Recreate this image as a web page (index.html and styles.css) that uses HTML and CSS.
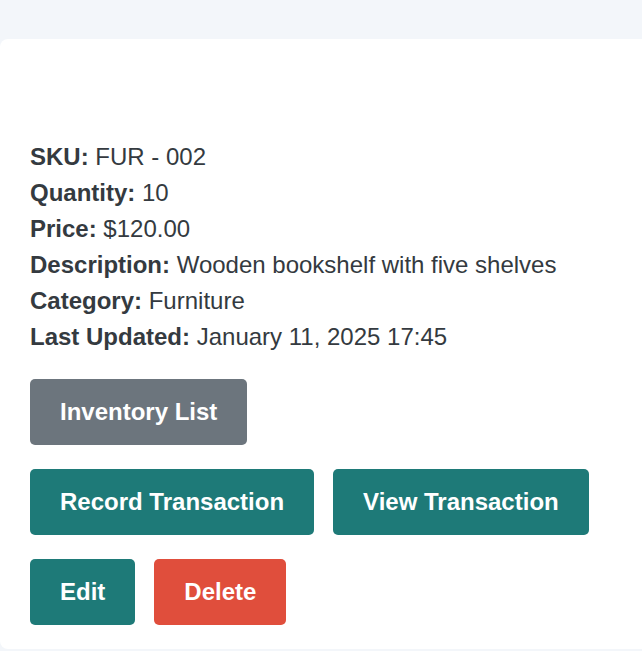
FILE: index.html
```html
<!DOCTYPE html>
<html lang="en">
<head>
<meta charset="utf-8">
<title>Item Detail</title>
<link rel="stylesheet" href="styles.css">
</head>
<body>
<div class="card">
  <div class="details">
    <div class="row"><strong>SKU:</strong> FUR - 002</div>
    <div class="row"><strong>Quantity:</strong> 10</div>
    <div class="row"><strong>Price:</strong> $120.00</div>
    <div class="row"><strong>Description:</strong> Wooden bookshelf with five shelves</div>
    <div class="row"><strong>Category:</strong> Furniture</div>
    <div class="row"><strong>Last Updated:</strong> January 11, 2025 17:45</div>
  </div>
  <div class="actions">
    <div class="btn-row">
      <a class="btn btn-gray" href="#">Inventory List</a>
    </div>
    <div class="btn-row">
      <a class="btn btn-teal" href="#">Record Transaction</a>
      <a class="btn btn-teal" href="#">View Transaction</a>
    </div>
    <div class="btn-row">
      <a class="btn btn-teal" href="#">Edit</a>
      <a class="btn btn-red" href="#">Delete</a>
    </div>
  </div>
</div>
</body>
</html>
```

FILE: styles.css
```css
html, body {
  margin: 0;
  padding: 0;
}
body {
  background: #f3f6fa;
  font-family: "Liberation Sans", Arial, sans-serif;
  color: #343a40;
  height: 651px;
}
.card {
  margin-top: 39px;
  height: 610px;
  box-sizing: border-box;
  background: #ffffff;
  border-radius: 8px 0 0 8px;
  padding: 100px 30px 24px 30px;
}
.details {
  font-size: 24px;
  line-height: 36px;
}
.details strong {
  font-weight: bold;
}
.actions {
  margin-top: 24px;
  display: flex;
  flex-direction: column;
  gap: 24px;
}
.btn-row {
  display: flex;
  gap: 19px;
}
.btn {
  display: inline-block;
  font-size: 24px;
  font-weight: bold;
  line-height: 36px;
  padding: 15px 30px;
  border-radius: 5px;
  color: #ffffff;
  text-decoration: none;
}
.btn-gray { background: #6c757d; }
.btn-teal { background: #1e7a78; }
.btn-red { background: #e04e3c; }
```
